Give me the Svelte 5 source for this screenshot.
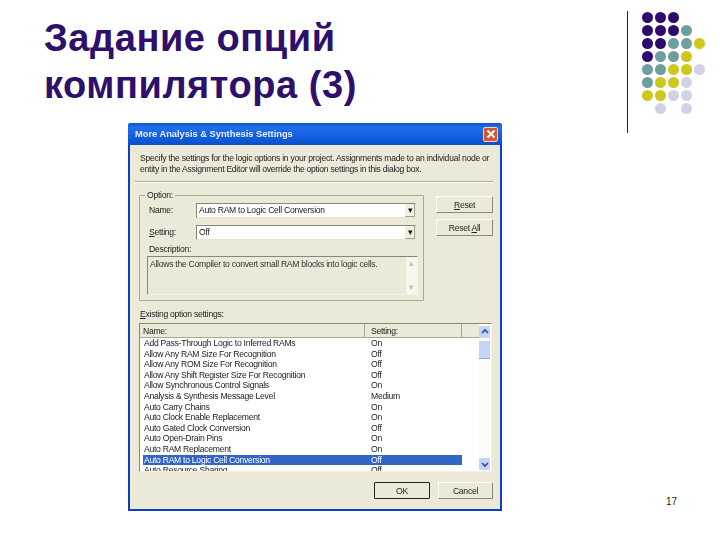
<script>
  const dots = [
    'ppp__',
    'pppt_',
    'pptty',
    'ptty_',
    'ttyyl',
    'tyyl_',
    'yyll_',
    '_l_l_',
  ].flatMap(row => row.split(''))

  const options = [
    ['Add Pass-Through Logic to Inferred RAMs', 'On'],
    ['Allow Any RAM Size For Recognition', 'Off'],
    ['Allow Any ROM Size For Recognition', 'Off'],
    ['Allow Any Shift Register Size For Recognition', 'Off'],
    ['Allow Synchronous Control Signals', 'On'],
    ['Analysis & Synthesis Message Level', 'Medium'],
    ['Auto Carry Chains', 'On'],
    ['Auto Clock Enable Replacement', 'On'],
    ['Auto Gated Clock Conversion', 'Off'],
    ['Auto Open-Drain Pins', 'On'],
    ['Auto RAM Replacement', 'On'],
    ['Auto RAM to Logic Cell Conversion', 'Off'],
    ['Auto Resource Sharing', 'Off'],
  ]
  const selected = 11
</script>

<div class="slide">
  <header>
    <h1>Задание опций<br>компилятора (3)</h1>
    <div class="decor">
      <div class="rule"></div>
      <div class="dots">
        {#each dots as d}
          <span class="dot {d}"></span>
        {/each}
      </div>
    </div>
  </header>

  <main>
    <div class="dialog">
      <div class="titlebar">
        <span>More Analysis &amp; Synthesis Settings</span>
        <button class="close" aria-label="Close">
          <svg viewBox="0 0 14 14" width="14" height="14">
            <path d="M3.5 3.5l7 7M10.5 3.5l-7 7" stroke="#fff" stroke-width="2" />
          </svg>
        </button>
      </div>

      <div class="body">
        <p class="intro">
          Specify the settings for the logic options in your project. Assignments made to an individual node or<br>
          entity in the Assignment Editor will override the option settings in this dialog box.
        </p>
        <div class="sep"></div>

        <div class="top">
          <fieldset>
            <legend>Option:</legend>
            <div class="field">
              <span class="lbl">Name:</span>
              <div class="combo"><span>Auto RAM to Logic Cell Conversion</span><i class="arrow">▾</i></div>
            </div>
            <div class="field">
              <span class="lbl"><u>S</u>etting:</span>
              <div class="combo"><span>Off</span><i class="arrow">▾</i></div>
            </div>
            <div class="desc-label">Description:</div>
            <div class="desc">
              <span>Allows the Compiler to convert small RAM blocks into logic cells.</span>
              <div class="desc-scroll"><i>▴</i><i>▾</i></div>
            </div>
          </fieldset>
          <div class="side">
            <button class="btn"><u>R</u>eset</button>
            <button class="btn">Reset <u>A</u>ll</button>
          </div>
        </div>

        <div class="list-label"><u>E</u>xisting option settings:</div>
        <div class="list">
          <div class="table">
            <div class="thead">
              <span class="c1">Name:</span>
              <span class="c2">Setting:</span>
            </div>
            <div class="rows">
              {#each options as [name, value], i}
                <div class="row" class:sel={i === selected}>
                  <span class="c1">{name}</span>
                  <span class="c2">{value}</span>
                </div>
              {/each}
            </div>
          </div>
          <div class="scrollbar">
            <div class="sb-btn">
              <svg viewBox="0 0 12 12" width="12" height="12"><path d="M3 7l3-3 3 3" fill="none" stroke="#2b4a9a" stroke-width="1.6" /></svg>
            </div>
            <div class="thumb"></div>
            <div class="sb-track"></div>
            <div class="sb-btn">
              <svg viewBox="0 0 12 12" width="12" height="12"><path d="M3 5l3 3 3-3" fill="none" stroke="#2b4a9a" stroke-width="1.6" /></svg>
            </div>
          </div>
        </div>

        <div class="actions">
          <button class="btn ok">OK</button>
          <button class="btn">Cancel</button>
        </div>
      </div>
    </div>
    <div class="page">17</div>
  </main>
</div>

<style>
  :global(body) {
    margin: 0;
    background: #fff;
  }

  .slide {
    width: 720px;
    height: 540px;
    overflow: hidden;
    font-family: 'Liberation Sans', Arial, sans-serif;
  }

  header {
    display: flex;
    justify-content: space-between;
    height: 123px;
    padding-left: 44px;
  }

  h1 {
    margin: 15px 0 0;
    font-size: 38px;
    line-height: 47px;
    font-weight: bold;
    letter-spacing: 0.55px;
    color: #2e0f6b;
  }

  .decor {
    display: flex;
    gap: 14px;
    width: 93px;
    height: 123px;
    padding-top: 11px;
  }

  .rule {
    width: 1px;
    height: 122px;
    background: #222;
  }

  .dots {
    display: grid;
    grid-template-columns: repeat(5, 11px);
    grid-auto-rows: 11px;
    gap: 2px;
    margin-top: 1px;
  }

  .dot {
    border-radius: 50%;
  }
  .p { background: #2e0a6e; }
  .t { background: #6e9e9e; }
  .y { background: #cdc81c; }
  .l { background: #d2d2e4; }
  ._ { background: transparent; }

  main {
    display: flex;
    height: 417px;
    padding-left: 128px;
    padding-right: 43px;
  }

  .page {
    margin-left: auto;
    margin-top: 373px;
    font-size: 10px;
    color: #222;
  }

  .dialog {
    width: 374px;
    height: 388px;
    box-sizing: border-box;
    background: #0a3fc4;
    border-radius: 3px 3px 0 0;
    padding: 0 2px 2px;
    display: flex;
    flex-direction: column;
    font-size: 8.6px;
    letter-spacing: -0.27px;
    color: #222;
    filter: blur(0.35px);
  }

  .titlebar {
    height: 22px;
    flex: none;
    display: flex;
    align-items: center;
    justify-content: space-between;
    padding: 0 4px 0 7px;
    margin: 0 -2px;
    background: linear-gradient(#0a55d8, #1f6eea 20%, #0f5cdc 70%, #0b4fc8);
    color: #e8eefc;
    font-size: 9.3px;
    letter-spacing: 0;
    font-weight: bold;
    border-radius: 3px 3px 0 0;
  }

  .close {
    width: 15px;
    height: 15px;
    padding: 0;
    border: 1px solid #f0d0c0;
    border-radius: 2px;
    background: #d8552e;
    display: flex;
    align-items: center;
    justify-content: center;
    box-sizing: border-box;
  }

  .close svg {
    flex: none;
  }

  .body {
    flex: 1;
    min-height: 0;
    background: #ece9d8;
    padding: 8px 7px 0 10px;
    display: flex;
    flex-direction: column;
  }

  .intro {
    margin: 0;
    line-height: 10.5px;
    white-space: nowrap;
  }

  .sep {
    height: 1px;
    margin: 7px 0 0 -5px;
    background: #aca899;
    border-bottom: 1px solid #fff;
  }

  .top {
    display: flex;
    justify-content: space-between;
    margin-top: 7px;
  }

  fieldset {
    width: 285px;
    height: 111px;
    box-sizing: border-box;
    margin: 0 0 0 -1px;
    padding: 2px 6px 0 7px;
    border: 1px solid #aca899;
    border-radius: 1px;
    min-width: 0;
  }

  legend {
    padding: 0 2px;
    margin-left: -2px;
    line-height: 10px;
  }

  .field {
    display: flex;
    align-items: center;
    height: 16px;
    margin-bottom: 6px;
    padding-left: 2px;
  }

  .lbl {
    width: 47px;
    flex: none;
  }

  .combo {
    width: 220px;
    height: 15px;
    box-sizing: border-box;
    display: flex;
    align-items: center;
    justify-content: space-between;
    padding-left: 2px;
    background: #fff;
    border: 1px solid;
    border-color: #8a8778 #e6e3d3 #e6e3d3 #8a8778;
  }

  .arrow {
    width: 10px;
    height: 13px;
    background: #f1efe2;
    box-shadow: inset -1px -1px 0 #a8a594;
    font-style: normal;
    font-size: 9px;
    line-height: 13px;
    text-align: center;
    color: #111;
  }

  .desc-label {
    line-height: 10px;
    margin-top: -2px;
    padding-left: 2px;
  }

  .desc {
    width: 271px;
    height: 39px;
    box-sizing: border-box;
    margin: 2px 0 0 0;
    padding: 2px 0 0 2px;
    display: flex;
    justify-content: space-between;
    border: 1px solid;
    border-color: #8a8778 #f4f2e6 #f4f2e6 #8a8778;
    color: #333;
  }

  .desc-scroll {
    width: 11px;
    margin-top: -2px;
    background: #f6f5ee;
    display: flex;
    flex-direction: column;
    justify-content: space-between;
    align-items: center;
    color: #c5c3b5;
  }

  .desc-scroll i {
    font-style: normal;
    font-size: 9px;
    line-height: 13px;
  }

  .side {
    display: flex;
    flex-direction: column;
    gap: 6px;
    padding-top: 6px;
  }

  .btn {
    width: 57px;
    height: 17px;
    padding: 0;
    font-family: inherit;
    font-size: inherit;
    letter-spacing: inherit;
    color: #222;
    background: #ece9d8;
    border: 1px solid;
    border-color: #fff #8a8778 #8a8778 #fff;
    border-radius: 1px;
  }

  .list-label {
    margin-top: 8px;
    line-height: 10px;
  }

  .list {
    display: flex;
    width: 353px;
    height: 149px;
    margin: 4px 0 0 -1px;
    box-sizing: border-box;
    background: #fff;
    border: 1px solid;
    border-color: #8a8778 #f4f2e6 #f4f2e6 #8a8778;
  }

  .table {
    flex: 1;
    min-width: 0;
    overflow: hidden;
  }

  .thead {
    display: flex;
    height: 13px;
    background: #ece9d8;
    border-bottom: 1px solid #aca899;
    line-height: 14px;
  }

  .thead .c1,
  .thead .c2 {
    border-right: 1px solid #aca899;
  }

  .c1 {
    width: 225px;
    flex: none;
    box-sizing: border-box;
    padding-left: 3px;
  }

  .c2 {
    width: 97px;
    flex: none;
    box-sizing: border-box;
    padding-left: 6px;
  }

  .rows {
    padding-left: 3px;
  }

  .row {
    display: flex;
    height: 10.6px;
    line-height: 10.6px;
    width: 319px;
    white-space: nowrap;
  }

  .row .c1 {
    width: 222px;
    padding-left: 1px;
  }

  .row.sel {
    background: #3366c4;
    color: #fff;
  }

  .scrollbar {
    width: 11px;
    margin-right: 1px;
    padding: 2px 0 1px;
    display: flex;
    flex-direction: column;
    background: #fbfbf8;
  }

  .sb-btn {
    height: 12px;
    flex: none;
    display: flex;
    align-items: center;
    justify-content: center;
    background: #c5d4f7;
  }

  .sb-btn svg {
    flex: none;
  }

  .thumb {
    height: 17px;
    margin-top: 3px;
    flex: none;
    background: #c5d4f7;
    border-bottom: 1px solid #8fa6dc;
  }

  .sb-track {
    flex: 1;
  }

  .actions {
    display: flex;
    justify-content: flex-end;
    gap: 8px;
    margin-top: 10px;
  }

  .actions .btn {
    width: 55px;
  }

  .actions .ok {
    width: 56px;
    border: 1px solid #222;
  }
</style>
